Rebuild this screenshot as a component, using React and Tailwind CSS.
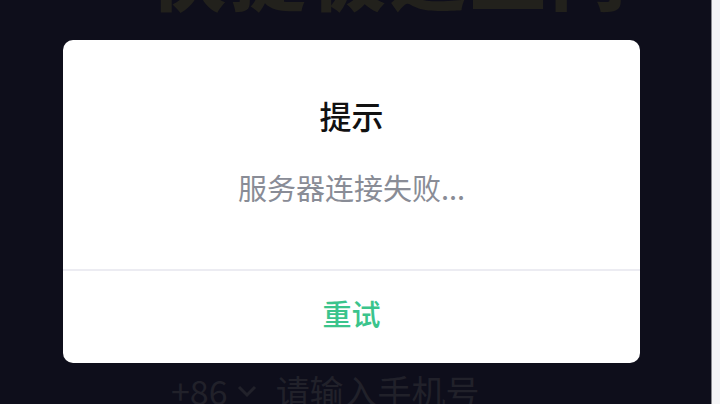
import { useState } from "react";

const cjk = { fontFamily: '"Noto Sans CJK SC", "Noto Sans", sans-serif' };

export default function App() {
  const [open, setOpen] = useState(true);

  return (
    <div className="flex h-[404px] w-[720px] overflow-hidden" style={cjk}>
      <div className="relative flex w-[711px] flex-col bg-[#0e0e1b]">
        {/* 登录页背景 */}
        <div className="flex h-[40px] items-start">
          <div className="ml-[150px] -mt-[66px] whitespace-nowrap text-[76px] font-black leading-none tracking-[4px] text-[#22211c]">
            快捷极速上门
          </div>
          <div className="ml-auto mr-[162px] h-[40px] w-[3px] bg-[#201f1b]" />
        </div>
        <div className="flex-1" />
        <div className="flex h-[33px] items-start pl-[171px] text-[34px] leading-[40px] text-[#21212a]">
          <span className="flex items-center gap-2">
            +86
            <svg width="22" height="14" viewBox="0 0 22 14" fill="none" stroke="currentColor" strokeWidth="3">
              <path d="M3 3l8 8 8-8" />
            </svg>
          </span>
          <span className="ml-[18px]">请输入手机号</span>
        </div>

        {open && (
          <div className="absolute left-[63px] top-[40px] flex h-[323px] w-[577px] flex-col rounded-[10px] bg-white">
            <div className="flex flex-1 flex-col items-center">
              <h3 className="mt-[55px] text-[32px] font-medium leading-[40px] text-[#111]">提示</h3>
              <p className="mt-[34px] text-[29px] leading-[36px] text-[#898c96]">服务器连接失败...</p>
            </div>
            <div className="h-[2px] bg-[#ececf2]" />
            <button
              onClick={() => setOpen(true)}
              className="flex h-[92px] items-center justify-center pb-[6px] text-[29px] font-medium text-[#3bc48c]"
            >
              重试
            </button>
          </div>
        )}
      </div>
      <div className="w-[9px] border-l border-[#8b8b90] bg-[#f4f4f6]" />
    </div>
  );
}
